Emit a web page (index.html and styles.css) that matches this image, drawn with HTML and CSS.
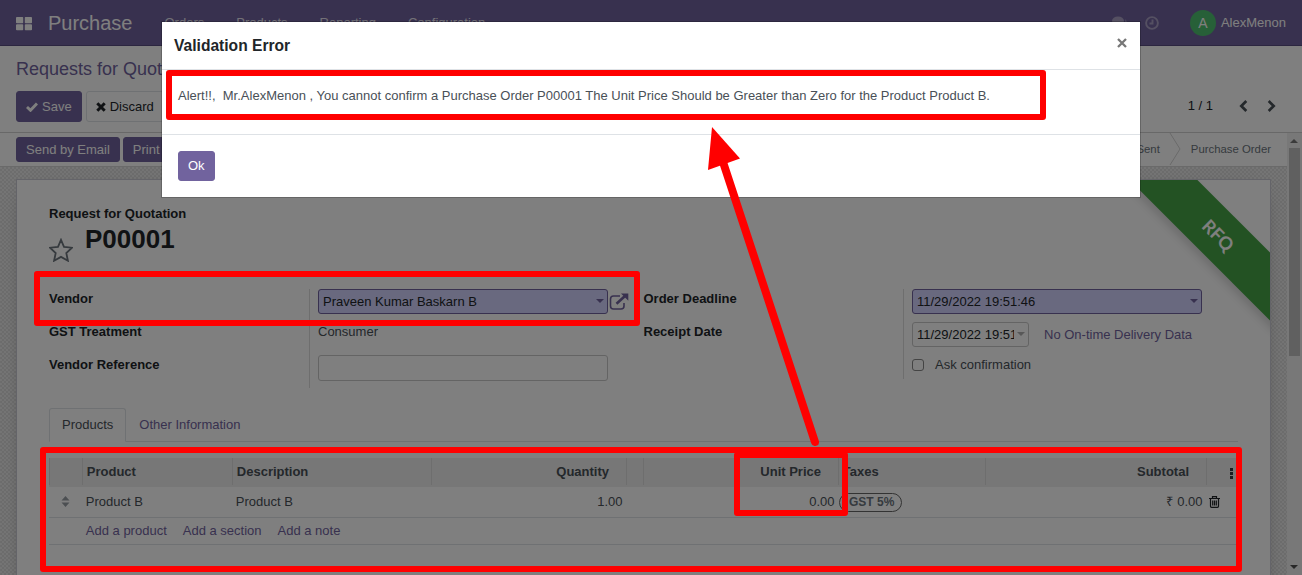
FILE: index.html
```html
<!DOCTYPE html>
<html lang="en">
<head>
<meta charset="utf-8">
<title>Purchase</title>
<link rel="stylesheet" href="styles.css">
</head>
<body>
<div class="app">
  <header class="navbar">
    <svg class="apps" width="16" height="14" viewBox="0 0 16 14"><path d="M1 0h5.500q.7 0 .7.700v4.800q0 .7-.7.700h-5.500q-1 0-1-.7v-4.800q0-.7 1-.7zM9.500 0h5.500q1 0 1 .7v4.800q0 .7-1 .7h-5.500q-.7 0-.7-.7v-4.800q0-.7.700-.7zM1 7.300h5.500q.7 0 .7.700v4.600q0 .7-.7.700h-5.500q-1 0-1-.7v-4.600q0-.7 1-.7zM9.500 7.300h5.500q1 0 1 .7v4.600q0 .7-1 .7h-5.500q-.7 0-.7-.7v-4.600q0-.7.700-.7z"/></svg>
    <span class="brand">Purchase</span>
    <nav class="menu"><span>Orders</span><span>Products</span><span>Reporting</span><span>Configuration</span></nav>
    <div class="systray">
      <svg class="chat" width="15" height="14" viewBox="0 0 15 14"><ellipse cx="6" cy="5" rx="6" ry="4.500"/><path d="M2 8v4l4-3zM13 3q4 4-1 7l2 3q-4 0-6-2 7-3 5-8z"/></svg>
      <svg class="clock" width="14" height="14" viewBox="0 0 14 14"><circle cx="7" cy="7" r="5.900"/><path d="M7.500 3.500v4h-3"/></svg>
      <span class="avatar">A</span><span class="user">AlexMenon</span>
    </div>
  </header>

  <section class="control">
    <div class="breadcrumb">Requests for Quotation <span>/ P00001</span></div>
    <div class="actions">
      <button class="btn primary"><svg width="12" height="10" viewBox="0 0 12 10"><path d="M1 5l3.500 3.300L11 1.500" fill="none" stroke="currentColor" stroke-width="2.900"/></svg>Save</button>
      <button class="btn plain"><svg width="10" height="10" viewBox="0 0 10 10"><path d="M1.300 1.300l7.400 7.400M8.700 1.300l-7.400 7.400" fill="none" stroke="currentColor" stroke-width="3"/></svg>Discard</button>
      <div class="pager"><span>1 / 1</span>
        <svg width="9" height="12" viewBox="0 0 9 12"><path d="M7.300 1L2.300 6l5 5"/></svg>
        <svg width="9" height="12" viewBox="0 0 9 12"><path d="M1.700 1l5 5-5 5"/></svg>
      </div>
    </div>
  </section>

  <div class="content">
    <main class="form">
      <div class="statusbar">
        <button class="btn small">Send by Email</button>
        <button class="btn small">Print RFQ</button>
        <div class="stages"><span>RFQ Sent</span><svg width="13" height="33" viewBox="0 0 13 33"><path d="M1 0l10 16L1 32"/></svg><span>Purchase Order</span></div>
      </div>
      <div class="canvas">
        <article class="sheet">
          <div class="ribbon"><span>RFQ</span></div>
          <div class="kind">Request for Quotation</div>
          <div class="title">
            <svg width="24" height="24" viewBox="0 0 24 24"><path d="M12 1.800l3 7 8 .9-5.700 5.300 1.600 7.700-6.900-3.800-6.900 3.800 1.600-7.700L1 9.700l8-.9z"/></svg>
            <h1>P00001</h1>
          </div>
          <div class="groups">
            <div class="group left">
              <div class="labels"><span>Vendor</span><span>GST Treatment</span><span>Vendor Reference</span></div>
              <div class="values">
                <div class="row"><div class="input required">Praveen Kumar Baskarn B<i class="caret"></i></div>
                  <svg class="external" width="20" height="18" viewBox="0 0 20 18"><path d="M11 3H4.500Q1.500 3 1.500 6v7q0 3 3 3H12q3 0 3-3v-3" fill="none" stroke="currentColor" stroke-width="1.600"/><path d="M7.500 10.800L16 3" fill="none" stroke="currentColor" stroke-width="2.600"/><path d="M12 .6h7.300v7.200z" fill="currentColor"/></svg></div>
                <div class="row text">Consumer</div>
                <div class="row"><div class="input tall"></div></div>
              </div>
            </div>
            <div class="group right">
              <div class="labels"><span>Order Deadline</span><span>Receipt Date</span></div>
              <div class="values">
                <div class="row"><div class="input required">11/29/2022 19:51:46<i class="caret"></i></div></div>
                <div class="row"><div class="input date"><span>11/29/2022 19:51:46</span><i class="caret"></i></div><a>No On-time Delivery Data</a></div>
                <div class="row check"><i class="box"></i>Ask confirmation</div>
              </div>
            </div>
          </div>
          <div class="tabs"><span class="tab active">Products</span><span class="tab">Other Information</span></div>
          <div class="table">
            <div class="tr head"><b></b><b>Product</b><b>Description</b><b class="num">Quantity</b><b></b><b class="num">Unit Price</b><b>Taxes</b><b class="num">Subtotal</b><b class="dots"><svg width="3" height="11" viewBox="0 0 3 11"><path d="M0 0h3v3H0zM0 4h3v3H0zM0 8h3v3H0z"/></svg></b></div>
            <div class="tr line"><span class="sort"><svg width="9" height="11" viewBox="0 0 8 11"><path d="M0 4.500L4 0l4 4.500zM0 6.500h8L4 11z"/></svg></span><span>Product B</span><span>Product B</span><span class="num">1.00</span><span></span><span class="num">0.00</span><span class="tax"><em>GST 5%</em></span><span class="num"><i class="rupee">₹</i> 0.00</span><span class="trash"><svg width="11" height="12" viewBox="0 0 11 12"><path d="M0 2.500h11M3.500 2.500V.7h4v1.800M1.500 2.500v7.800q0 1 1 1h6q1 0 1-1V2.500M3.700 4.500v5M5.500 4.500v5M7.300 4.500v5"/></svg></span></div>
            <div class="tr add"><div><a>Add a product</a><a>Add a section</a><a>Add a note</a></div></div>
            <div class="tr blank"></div>
          </div>
        </article>
      </div>
    </main>
    <aside class="scrollbar"><i class="up"></i><i class="thumb"></i><i class="down"></i></aside>
  </div>
</div>

<div class="backdrop"></div>
<div class="modal">
  <div class="modal-head"><h4>Validation Error</h4><svg width="10" height="10" viewBox="0 0 10 10"><path d="M1 1l8 8M9 1l-8 8"/></svg></div>
  <div class="modal-body">Alert!!,&nbsp; Mr.AlexMenon , You cannot confirm a Purchase Order P00001 The Unit Price Should be Greater than Zero for the Product Product B.</div>
  <div class="modal-foot"><button class="btn ok">Ok</button></div>
</div>
<svg class="marks" width="1302" height="575" viewBox="0 0 1302 575">
  <g fill="none" stroke="#f00" stroke-width="6" stroke-linejoin="round">
    <rect x="169" y="73" width="874" height="44"/>
    <rect x="37" y="274" width="600" height="49"/>
    <rect x="43" y="450" width="1196" height="119"/>
    <rect x="737" y="455" width="108" height="58"/>
    <path d="M815 442L723 162" stroke-width="8" stroke-linecap="round"/>
  </g>
  <path d="M712 127l28 31.500-32 11.500z" fill="#f00"/>
</svg>
</body>
</html>
```
FILE: styles.css
```css
* { box-sizing: border-box; }
body {
  margin: 0;
  width: 1302px;
  height: 575px;
  overflow: hidden;
  position: relative;
  font: 13px/20px "Liberation Sans", Arial, sans-serif;
  color: #495057;
}
.app { display: flex; flex-direction: column; height: 575px; background: #fff; overflow: hidden; }
a { color: #71639e; }
.btn { display: flex; align-items: center; border: 1px solid #71639e; border-radius: 3px; font: inherit; white-space: nowrap; }
.primary, .small, .ok { background: #71639e; color: #fff; }

.navbar { flex: none; height: 46px; display: flex; align-items: center; padding: 0 16px; background: #71639e; border-bottom: 1px solid #584c80; color: #fff; }
.apps { fill: #fff; margin-top: 2px; }
.brand { margin-left: 16px; font-size: 20px; }
.menu { display: flex; gap: 32px; margin-left: 32px; color: #e6e3ee; }
.systray { margin-left: auto; display: flex; align-items: center; fill: #aaa1c5; }
.chat { margin-right: 18px; }
.clock { margin-right: 31px; fill: none; stroke: #aaa1c5; stroke-width: 1.9; }
.avatar { width: 26px; height: 26px; margin-right: 5px; border-radius: 50%; background: #4fc071; text-align: center; line-height: 27px; font-size: 14px; }

.control { flex: none; height: 87px; padding: 13px 16px 0; border-bottom: 1px solid #d0d0d0; }
.breadcrumb { font-size: 18px; color: #71639e; line-height: 20px; white-space: nowrap; }
.breadcrumb span { color: #495057; }
.actions { display: flex; gap: 4px; margin-top: 12px; }
.actions .btn { height: 31px; padding: 0 9px; gap: 4px; }
.actions .plain { background: #fff; color: #212529; border-color: #dee2e6; }
.pager { margin-left: auto; display: flex; align-items: center; height: 29px; padding-right: 10px; color: #212529; }
.pager svg { margin-left: 19px; fill: none; stroke: #495057; stroke-width: 2.7; }
.pager span + svg { margin-left: 26px; }

.content { flex: 1; display: flex; min-height: 0; }
.form { width: 1287px; display: flex; flex-direction: column; }
.statusbar { flex: none; height: 34px; display: flex; gap: 3px; padding: 4px 16px 0; border-bottom: 1px solid #d4d4d4; }
.small { height: 25px; padding: 0 9px; }
.stages { margin: -4px 0 0 auto; height: 32px; display: flex; align-items: center; font-size: 11.375px; color: #6c757d; }
.stages svg { margin: 0 9px; fill: none; stroke: #d4d4d4; }

.canvas { flex: 1; min-height: 0; padding: 12px 16px 0; background: #e2e2e2 conic-gradient(#dadada 25%, #eaeaea 0 50%, #dadada 0 75%, #eaeaea 0) 0 0 / 4px 4px; }
.sheet { position: relative; height: 500px; width: 1255px; padding: 24px 32px 0; background: #fff; border: 1px solid #c8c8d3; box-shadow: 0 5px 20px -15px #000; }
.ribbon { position: absolute; top: 0; right: 0; width: 150px; height: 160px; overflow: hidden; }
.ribbon span { position: absolute; left: -14px; top: 30.500px; width: 225px; height: 48px; transform: rotate(45deg); background: #46a546; color: #fff; box-shadow: 0 5px 10px rgba(0,0,0,.15); text-align: center; font: 700 18px/48px Lato, sans-serif; }
.kind { font-weight: bold; color: #212529; line-height: 20px; }
.title { display: flex; gap: 12px; height: 65px; }
.title svg { margin-top: 14px; fill: none; stroke: #6c757d; stroke-width: 1.8; }
h1 { margin: 0; font-size: 26px; line-height: 31px; color: #212529; }

.groups { display: flex; width: 1189px; height: 99px; }
.group { width: 594.5px; display: flex; }
.labels { width: 260px; display: flex; flex-direction: column; gap: 13px; font-weight: bold; color: #212529; }
.right .labels { width: 259.5px; }
.values { border-left: 1px solid #ddd; padding-left: 8px; display: flex; flex-direction: column; gap: 8px; }
.right .values { height: 90px; }
.row { display: flex; align-items: center; height: 25px; }
.row.text { align-items: flex-start; padding-top: 0; }
.input { position: relative; width: 290px; height: 25px; padding: 0 4px; border: 1px solid #c8c8c8; border-radius: 3px; color: #212529; line-height: 24px; }
.input.tall { height: 26px; }
.required { background: #d2d2ff; border-color: #71639e; color: #212529; }
.caret { position: absolute; right: 3px; top: 9px; border: 4px solid transparent; border-top-color: #71639e; border-bottom: 0; }
.external { color: #71639e; margin-left: 1px; }
.date { width: 117px; margin-right: 15px; }
.date span { display: block; width: 97px; overflow: hidden; white-space: nowrap; }
.date .caret { border-top-color: #b0b0b0; right: 3px; }
.check { height: 20px; gap: 11px; }
.box { width: 12px; height: 12px; border: 1px solid #888; border-radius: 3px; }

.tabs { display: flex; height: 34px; margin-top: 20px; border-bottom: 1px solid #dee2e6; width: 1189px; }
.tab { padding: 7px 13px 0; color: #71639e; }
.active { height: 34px; padding: 6px 12px 0; border: 1px solid #dee2e6; border-bottom-color: #fff; border-radius: 3px 3px 0 0; color: #495057; background: #fff; }
.active { line-height: 19px; }
.table { margin-top: 16px; width: 1189px; }
.tr { display: grid; grid-template-columns: 34px 150px 199px 195px 17px 195px 147px 221px 31px; border-bottom: 1px solid #dee2e6; }
.head { height: 29px; background: #eee; border: 0; color: #495057; align-items: start; }
.head b { height: 27px; padding: 0 4px 0 3.8px; line-height: 27px; border-right: 1px solid #ddd; }
.head b:first-child { border-left: 1px solid #ddd; }
.head .num { padding-right: 17px; }
.head .dots { border: 0; padding: 10px 0 0 23px; line-height: 0; }
.dots svg { fill: #343a40; }
.num { text-align: right; }
.line { height: 31px; line-height: 29px; }
.line > span { padding: 0 2.8px; }
.line .num { padding-right: 4.5px; }
.rupee { font-style: normal; display: inline-block; width: 8px; text-align: left; }
.line .sort { padding: 9px 0 0 12px; line-height: 0; fill: #999ea5; }
.line .tax { padding: 6px 0 0; line-height: 0; }
.tax em { display: inline-block; height: 19px; padding: 0 7px 0 9px; border: 1px solid #666; border-radius: 10px; font: bold 12px/17px "Liberation Sans", sans-serif; color: #6c757d; }
.line .trash { padding: 8.500px 0 0 2px; line-height: 0; fill: none; stroke: #212529; stroke-width: 1.2; }
.add { height: 27px; }
.add div { grid-column: 2 / -1; display: flex; gap: 16px; padding-left: 2.8px; line-height: 26px; }
.blank { height: 27px; }

.scrollbar { width: 15px; background: #f1f1f1; display: flex; flex-direction: column; align-items: center; }
.up { margin: 6px 1px 0 0; border: 4px solid transparent; border-bottom-color: #777; border-top: 0; }
.thumb { margin-top: 5px; width: 11px; height: 208px; background: #c1c1c1; }
.down { margin: auto 1px 6px 0; border: 4px solid transparent; border-top-color: #505050; border-bottom: 0; }

.backdrop { position: absolute; inset: 0; background: rgba(0,0,0,.5); }
.modal { position: absolute; left: 161px; top: 21px; width: 980px; height: 177px; background: #fff; background-clip: padding-box; border: 1px solid rgba(0,0,0,.2); }
.modal-head { display: flex; height: 48px; padding: 0 13px 0 12px; justify-content: space-between; border-bottom: 1px solid #dee2e6; color: #212529; }
h4 { margin: 0; font-size: 15.6px; line-height: 47px; }
.modal-head svg { margin-top: 16px; fill: none; stroke: #777; stroke-width: 2.3; }
.modal-body { height: 65px; padding: 16px; border-bottom: 1px solid #dee2e6; white-space: nowrap; }
.modal-foot { padding: 16px; }
.ok { height: 30px; padding: 0 9px; }
.marks { position: absolute; left: 0; top: 0; }
```
